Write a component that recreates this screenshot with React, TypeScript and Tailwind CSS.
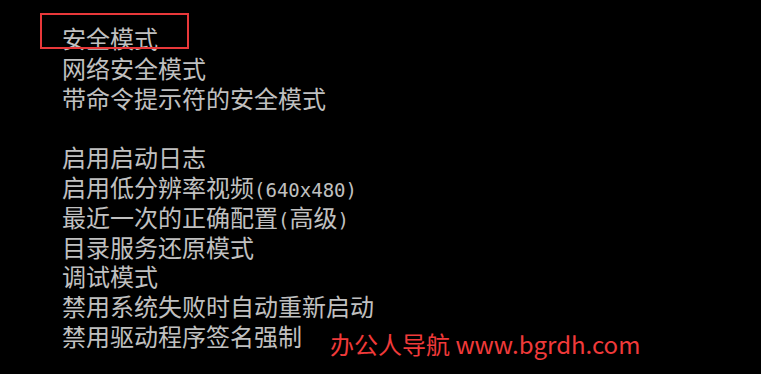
import React from 'react';

const items: (string | null)[] = [
  '安全模式',
  '网络安全模式',
  '带命令提示符的安全模式',
  null,
  '启用启动日志',
  '启用低分辨率视频|(640x480)',
  '最近一次的正确配置|(|高级|)',
  '目录服务还原模式',
  '调试模式',
  '禁用系统失败时自动重新启动',
  '禁用驱动程序签名强制',
];

const cjk = { fontFamily: '"Noto Sans CJK SC", sans-serif' };

const Ascii = ({ children }: { children: React.ReactNode }) => (
  <span className="font-['DejaVu_Sans_Mono',monospace] text-[19px] leading-none">{children}</span>
);

export default function App() {
  return (
    <div className="relative w-[761px] h-[374px] bg-black overflow-hidden" style={cjk}>
      <div className="flex flex-col pl-[62px] pt-[23px] text-[24px] text-[#c0c0c0]">
        {items.map((item, i) => {
          if (item === null) return <div key={i} className="h-[29.8px]" />;
          const parts = item.split('|');
          return (
            <div key={i} className="h-[29.8px] leading-[29.8px] whitespace-nowrap overflow-visible">
              {parts.map((p, j) =>
                /^[\x00-\x7f]+$/.test(p) ? <Ascii key={j}>{p}</Ascii> : <span key={j}>{p}</span>
              )}
            </div>
          );
        })}
      </div>

      {/* highlight box */}
      <div className="absolute left-[40px] top-[13px] w-[149px] h-[36px] border-2 border-[#e8383a]" />

      {/* watermark */}
      <div className="absolute left-[330px] top-[329px] text-[24px] leading-[30px] text-[#f03a3a] whitespace-nowrap">
        办公人导航 www.bgrdh.com
      </div>
    </div>
  );
}
